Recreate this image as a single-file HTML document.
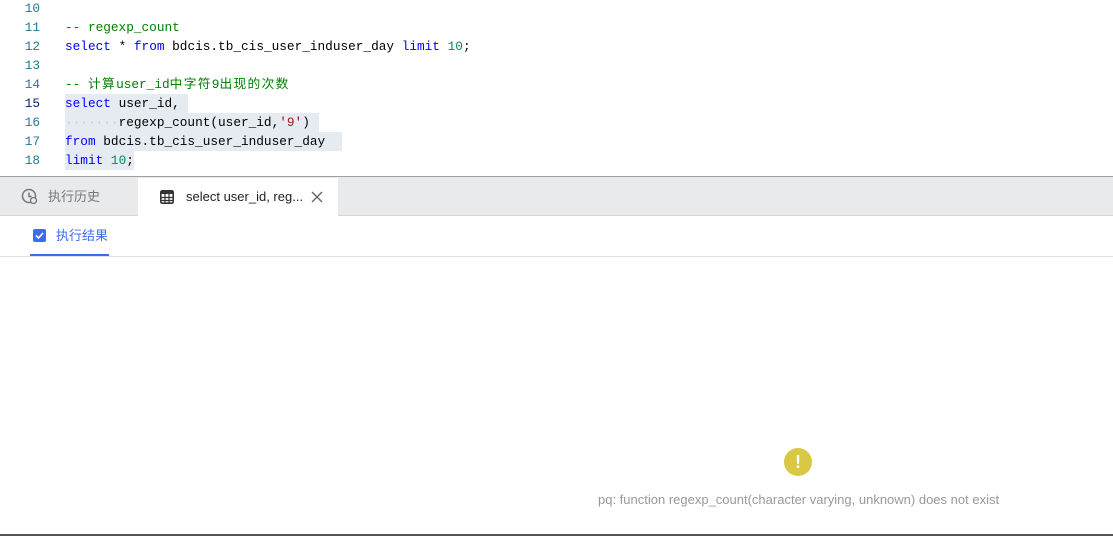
<!DOCTYPE html><html><head><style>
body{margin:0;width:1113px;height:536px;overflow:hidden;background:#fff;font-family:"Liberation Sans","Noto Sans CJK SC",sans-serif;position:relative}
.code{position:absolute;left:0;top:0;width:1113px;height:176px;font-family:"Liberation Mono","Noto Sans CJK SC",monospace;font-size:12.75px}
.ln{position:absolute;left:0;width:40px;text-align:right;color:#237893;height:19px;line-height:19px}
.tx{position:absolute;left:65px;height:19px;line-height:19px;white-space:pre;color:#000}
.k{color:#0000ff}.c{color:#008000}.n{color:#098658}.s{color:#a31515}
.hl{position:absolute;background:#e5ebf1}
.cj{letter-spacing:1.3px}
</style></head><body>
<div class="code">
<div class="hl" style="left:65px;top:94px;width:123px;height:19px"></div>
<div class="hl" style="left:65px;top:113px;width:254px;height:19px"></div>
<div class="hl" style="left:65px;top:132px;width:277px;height:19px"></div>
<div class="hl" style="left:65px;top:151px;width:69px;height:19px"></div>
<div class="ln" style="top:-1px">10</div>
<div class="ln" style="top:18px">11</div><div class="tx c" style="top:18px">-- regexp_count</div>
<div class="ln" style="top:37px">12</div><div class="tx" style="top:37px"><span class="k">select</span> * <span class="k">from</span> bdcis.tb_cis_user_induser_day <span class="k">limit</span> <span class="n">10</span>;</div>
<div class="ln" style="top:56px">13</div>
<div class="ln" style="top:75px">14</div><div class="tx c" style="top:75px">-- <span class="cj">计算</span>user_id<span class="cj">中字符</span>9<span class="cj">出现的次数</span></div>
<div class="ln" style="top:94px;color:#0b216f">15</div><div class="tx" style="top:94px"><span class="k">select</span> user_id,</div>
<div class="ln" style="top:113px">16</div><div class="tx" style="top:113px"><span style="color:#c8c8c8">·······</span>regexp_count(user_id,<span class="s">'9'</span>)</div>
<div class="ln" style="top:132px">17</div><div class="tx" style="top:132px"><span class="k">from</span> bdcis.tb_cis_user_induser_day</div>
<div class="ln" style="top:151px">18</div><div class="tx" style="top:151px"><span class="k">limit</span> <span class="n">10</span>;</div>
</div>
<div style="position:absolute;left:0;top:176px;width:1113px;height:1px;background:#a0a0a0"></div>
<div style="position:absolute;left:0;top:177px;width:1113px;height:38px;background:#e9eaec;border-bottom:1px solid #d8d8d8"></div>
<svg style="position:absolute;left:21px;top:188px" width="18" height="18" viewBox="0 0 18 18"><circle cx="8" cy="8" r="6.5" fill="none" stroke="#777" stroke-width="1.5"/><path d="M8 4.5V8.5H10.5" fill="none" stroke="#777" stroke-width="1.5"/><circle cx="12.5" cy="12.5" r="3" fill="#e9eaec" stroke="#777" stroke-width="1.3"/></svg>
<div style="position:absolute;left:48px;top:188px;font-size:13px;color:#777;line-height:18px">执行历史</div>
<div style="position:absolute;left:138px;top:178px;width:200px;height:38px;background:#fff"></div>
<svg style="position:absolute;left:160px;top:190px" width="14" height="14" viewBox="0 0 14 14"><rect x="0.8" y="0.8" width="12.4" height="12.4" rx="1.5" fill="none" stroke="#333" stroke-width="1.6"/><rect x="1" y="1" width="12" height="3" fill="#333"/><path d="M1 7.5H13M1 10.5H13M5 4V13M9 4V13" stroke="#333" stroke-width="1.2"/></svg>
<div style="position:absolute;left:186px;top:188px;font-size:13px;color:#222;line-height:18px">select user_id, reg...</div>
<svg style="position:absolute;left:311px;top:191px" width="12" height="12" viewBox="0 0 12 12"><path d="M1 1L11 11M11 1L1 11" stroke="#666" stroke-width="1.4"/></svg>
<svg style="position:absolute;left:33px;top:229px" width="13" height="13" viewBox="0 0 13 13"><rect width="13" height="13" rx="2" fill="#3d6bf5"/><path d="M3 6.5L5.5 9L10 4" fill="none" stroke="#fff" stroke-width="1.6"/></svg>
<div style="position:absolute;left:56px;top:227px;font-size:13px;color:#3d6bf5;line-height:18px">执行结果</div>
<div style="position:absolute;left:0;top:256px;width:1113px;height:1px;background:#e0e0e0"></div>
<div style="position:absolute;left:30px;top:254px;width:79px;height:2px;background:#3d6bf5"></div>
<div style="position:absolute;left:784px;top:448px;width:28px;height:28px;border-radius:50%;background:#d8c843;color:#fff;font-weight:bold;font-size:18px;text-align:center;line-height:28px">!</div>
<div style="position:absolute;left:598px;top:492px;font-size:13px;color:#999;line-height:16px;white-space:nowrap">pq: function regexp_count(character varying, unknown) does not exist</div>
<div style="position:absolute;left:0;top:534px;width:1113px;height:2px;background:#555"></div>
</body></html>
